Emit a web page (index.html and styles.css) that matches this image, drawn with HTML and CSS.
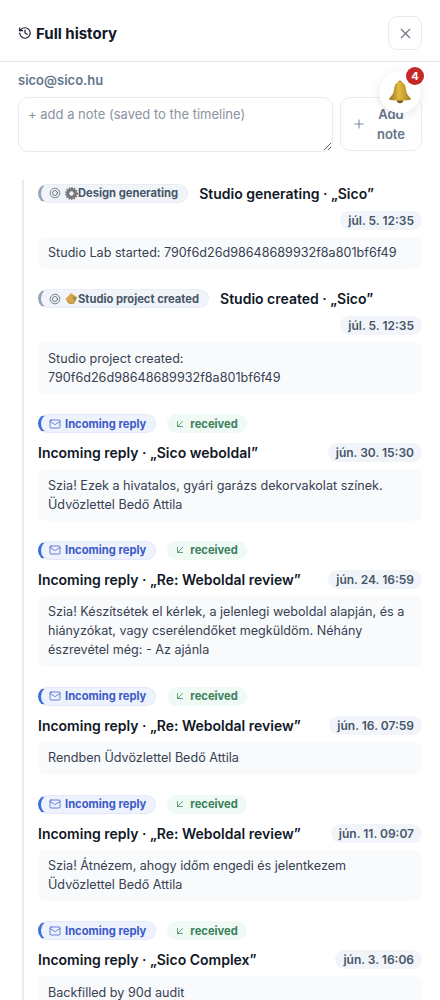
FILE: index.html
```html
<!DOCTYPE html>
<html lang="en">
<head>
    <meta charset="UTF-8">
    <meta name="viewport" content="width=device-width, initial-scale=1.0">
    <title>Full history</title>
    <link rel="stylesheet" href="styles.css">
</head>
<body>
    <svg class="sprite" width="0" height="0">
        <symbol id="i-mail" viewBox="0 0 24 24"><rect x="2" y="4" width="20" height="16" rx="2"/><path d="m22 7-8.97 5.7a1.94 1.94 0 0 1-2.06 0L2 7"/></symbol>
        <symbol id="i-in" viewBox="0 0 24 24"><path d="M17 7 7 17"/><path d="M17 17H7V7"/></symbol>
        <symbol id="i-cog" viewBox="0 0 24 24"><circle cx="12" cy="12" r="9.5" stroke-dasharray="3 1.4"/><circle cx="12" cy="12" r="5"/></symbol>
        <symbol id="i-gear" viewBox="0 0 24 24"><circle cx="12" cy="12" r="7" fill="none" stroke="#77797e" stroke-width="6"/><circle cx="12" cy="12" r="10.5" fill="none" stroke="#6b6d72" stroke-width="3" stroke-dasharray="2.4 2.4"/></symbol>
    </svg>

    <div class="drawer">
        <!-- Header -->
        <div class="drawer-head">
            <h1 class="drawer-title">
                <svg class="icon" width="14" height="14" viewBox="0 0 24 24"><path d="M3 12a9 9 0 1 0 9-9 9.75 9.75 0 0 0-6.74 2.74L3 8"/><path d="M3 3v5h5"/><path d="M12 7v5l4 2"/></svg>
                Full history
            </h1>
            <button class="close-btn">
                <svg class="icon" width="17" height="17" viewBox="0 0 24 24"><path d="M18 6 6 18"/><path d="m6 6 12 12"/></svg>
            </button>
        </div>

        <div class="drawer-body">
            <div class="contact">sico@sico.hu</div>

            <!-- Add note -->
            <div class="note-form">
                <textarea class="note-input" placeholder="+ add a note (saved to the timeline)"></textarea>
                <button class="note-btn">
                    <svg class="icon" width="14" height="14" viewBox="0 0 24 24"><path d="M5 12h14"/><path d="M12 5v14"/></svg>
                    <span>Add note</span>
                </button>
            </div>

            <!-- Timeline -->
            <div class="timeline">
                <div class="event">
                    <div class="event-head event-head-studio">
                        <span class="tag tag-studio">
                            <svg class="icon" width="12" height="12"><use href="#i-cog"/></svg>
                            <span class="tag-text"><svg class="emoji" width="13" height="13"><use href="#i-gear"/></svg>Design generating</span>
                        </span>
                        <span class="event-title">Studio generating · „Sico”</span>
                        <span class="event-time">júl. 5. 12:35</span>
                    </div>
                    <div class="event-text">Studio Lab started: 790f6d26d98648689932f8a801bf6f49</div>
                </div>

                <div class="event">
                    <div class="event-head event-head-studio">
                        <span class="tag tag-studio">
                            <svg class="icon" width="12" height="12"><use href="#i-cog"/></svg>
                            <span class="tag-text"><svg class="emoji" width="13" height="13" viewBox="0 0 24 24"><path d="M1 13 11 2l11 7-5 13-11-2z" fill="#dba64a"/><path d="M1 13l6 8 10 1-11-3z" fill="#8a6a2c"/><path d="M13 8l9 2-4 8z" fill="#7d9a5e"/></svg>Studio project created</span>
                        </span>
                        <span class="event-title">Studio created · „Sico”</span>
                        <span class="event-time">júl. 5. 12:35</span>
                    </div>
                    <div class="event-text">Studio project created: 790f6d26d98648689932f8a801bf6f49</div>
                </div>

                <div class="event">
                    <div class="event-head">
                        <span class="tag tag-reply"><svg class="icon" width="12" height="12"><use href="#i-mail"/></svg><span class="tag-text">Incoming reply</span></span>
                        <span class="tag tag-received"><svg class="icon" width="12" height="12"><use href="#i-in"/></svg><span class="tag-text">received</span></span>
                        <span class="event-title">Incoming reply · „Sico weboldal”</span>
                        <span class="event-time">jún. 30. 15:30</span>
                    </div>
                    <div class="event-text">Szia! Ezek a hivatalos, gyári garázs dekorvakolat színek. Üdvözlettel Bedő Attila</div>
                </div>

                <div class="event">
                    <div class="event-head">
                        <span class="tag tag-reply"><svg class="icon" width="12" height="12"><use href="#i-mail"/></svg><span class="tag-text">Incoming reply</span></span>
                        <span class="tag tag-received"><svg class="icon" width="12" height="12"><use href="#i-in"/></svg><span class="tag-text">received</span></span>
                        <span class="event-title">Incoming reply · „Re: Weboldal review”</span>
                        <span class="event-time">jún. 24. 16:59</span>
                    </div>
                    <div class="event-text">Szia! Készítsétek el kérlek, a jelenlegi weboldal alapján, és a hiányzókat, vagy cserélendőket megküldöm. Néhány észrevétel még: - Az ajánla</div>
                </div>

                <div class="event">
                    <div class="event-head">
                        <span class="tag tag-reply"><svg class="icon" width="12" height="12"><use href="#i-mail"/></svg><span class="tag-text">Incoming reply</span></span>
                        <span class="tag tag-received"><svg class="icon" width="12" height="12"><use href="#i-in"/></svg><span class="tag-text">received</span></span>
                        <span class="event-title">Incoming reply · „Re: Weboldal review”</span>
                        <span class="event-time">jún. 16. 07:59</span>
                    </div>
                    <div class="event-text">Rendben Üdvözlettel Bedő Attila</div>
                </div>

                <div class="event">
                    <div class="event-head">
                        <span class="tag tag-reply"><svg class="icon" width="12" height="12"><use href="#i-mail"/></svg><span class="tag-text">Incoming reply</span></span>
                        <span class="tag tag-received"><svg class="icon" width="12" height="12"><use href="#i-in"/></svg><span class="tag-text">received</span></span>
                        <span class="event-title">Incoming reply · „Re: Weboldal review”</span>
                        <span class="event-time">jún. 11. 09:07</span>
                    </div>
                    <div class="event-text">Szia! Átnézem, ahogy időm engedi és jelentkezem Üdvözlettel Bedő Attila</div>
                </div>

                <div class="event">
                    <div class="event-head">
                        <span class="tag tag-reply"><svg class="icon" width="12" height="12"><use href="#i-mail"/></svg><span class="tag-text">Incoming reply</span></span>
                        <span class="tag tag-received"><svg class="icon" width="12" height="12"><use href="#i-in"/></svg><span class="tag-text">received</span></span>
                        <span class="event-title">Incoming reply · „Sico Complex”</span>
                        <span class="event-time">jún. 3. 16:06</span>
                    </div>
                    <div class="event-text">Backfilled by 90d audit</div>
                </div>
            </div>
        </div>

        <!-- Floating notifications -->
        <div class="bell">
            <svg width="26" height="26" viewBox="0 0 26 26">
                <defs>
                    <linearGradient id="bellGold" x1="0" y1="0" x2="1" y2="0">
                        <stop offset="0" stop-color="#8f7420"/>
                        <stop offset="0.45" stop-color="#e3bb3e"/>
                        <stop offset="1" stop-color="#a5801f"/>
                    </linearGradient>
                </defs>
                <circle cx="13" cy="21" r="3.2" fill="#7a5a1c"/>
                <circle cx="13" cy="3.4" r="1.9" fill="#b08d2a"/>
                <path d="M13 3C8.6 3 7.4 6.6 7 10.5 6.6 14.6 4.6 17 2.4 19.2c-.7.8 0 1.6 1 1.7 3 .4 6.3.6 9.6.6s6.600-.2 9.600-.6c1-.1 1.700-.9 1-1.700C21.400 17 19.400 14.600 19 10.500 18.600 6.600 17.400 3 13 3z" fill="url(#bellGold)"/>
            </svg>
            <span class="bell-badge">4</span>
        </div>
    </div>
</body>
</html>
```

FILE: styles.css
```css
* {
    box-sizing: border-box;
}

body {
    margin: 0;
    font-family: Inter, "Noto Sans", sans-serif;
    color: #111827;
    background: #fff;
}

.sprite {
    position: absolute;
}

.icon {
    fill: none;
    stroke: currentColor;
    stroke-width: 1.5;
    stroke-linecap: round;
    stroke-linejoin: round;
    flex-shrink: 0;
}

.drawer {
    position: relative;
    width: 440px;
    height: 1000px;
    overflow: hidden;
}

/* Header */
.drawer-head {
    display: flex;
    align-items: center;
    justify-content: space-between;
    height: 62px;
    padding: 5px 18px 0;
    border-bottom: 1px solid #e5e7eb;
}

.drawer-title {
    display: flex;
    align-items: center;
    gap: 4px;
    margin: 0;
    font-size: 15px;
    font-weight: 700;
}

.drawer-title .icon {
    stroke-width: 2;
}

.close-btn {
    display: flex;
    align-items: center;
    justify-content: center;
    width: 34px;
    height: 34px;
    padding: 0;
    color: #6b7280;
    background: #fff;
    border: 1px solid #e8ebf0;
    border-radius: 9px;
}

.drawer-body {
    padding: 9px 18px 0;
}

.contact {
    font-size: 13px;
    font-weight: 600;
    line-height: 18px;
    color: #64748b;
}

/* Add note */
.note-form {
    display: flex;
    gap: 7px;
    margin-top: 8px;
}

.note-input {
    flex: 1;
    height: 55px;
    padding: 7px 9px;
    font-family: inherit;
    font-size: 13px;
    line-height: 18px;
    color: #111827;
    border: 1px solid #e8ebf0;
    border-radius: 10px;
    outline: none;
}

.note-input::placeholder {
    color: #8b93a1;
}

.note-btn {
    display: flex;
    align-items: center;
    gap: 5px;
    width: 82px;
    height: 54px;
    padding: 0 10px 0 11px;
    font-family: inherit;
    font-size: 13px;
    font-weight: 600;
    line-height: 20px;
    color: #64748b;
    background: #fff;
    border: 1px solid #e8ebf0;
    border-radius: 10px;
}

/* Timeline */
.timeline {
    display: flex;
    flex-direction: column;
    gap: 20px;
    margin: 28px 0 0 4px;
    padding: 3.5px 0 0 14px;
    border-left: 2px solid #e8ebf0;
}

.event-head {
    display: flex;
    flex-wrap: wrap;
    align-items: center;
    gap: 10px 11px;
}

.event-head-studio {
    row-gap: 8px;
}

.tag {
    display: inline-flex;
    align-items: center;
    gap: 4px;
    height: 19px;
    padding: 0 9px 0 8px;
    font-size: 11.2px;
    font-weight: 700;
    border-radius: 999px;
}

.tag-studio {
    color: #475569;
    background: #f1f5f9;
    border: 1px solid #e8edf3;
    border-left: 3px solid #94a3b8;
}

.tag-reply {
    color: #3b5bc9;
    background: #eef2fd;
    border: 1px solid #e3e9fa;
    border-left: 3px solid #3b6fd8;
}

.tag-received {
    padding-left: 7px;
    color: #3b7f5c;
    background: #effaf4;
}

.tag-text {
    display: inline-flex;
    align-items: center;
}

.emoji {
    flex-shrink: 0;
}

.event-title {
    font-size: 14px;
    font-weight: 600;
    line-height: 19px;
    color: #111827;
}

.event-time {
    margin-left: auto;
    padding: 0 8px;
    font-size: 12px;
    font-weight: 600;
    line-height: 19px;
    color: #475569;
    background: #f1f5f9;
    border-radius: 999px;
}

.event-text {
    margin-top: 7px;
    padding: 7.5px 10px 6.5px;
    font-size: 12.6px;
    line-height: 1.5;
    color: #374151;
    background: #f8fafc;
    border-radius: 8px;
}

/* Floating notifications */
.bell {
    position: absolute;
    top: 71px;
    left: 379px;
    display: flex;
    align-items: center;
    justify-content: center;
    width: 42px;
    height: 42px;
    background: #fff;
    border-radius: 50%;
    box-shadow: 0 2px 10px rgba(15, 23, 42, 0.1);
}

.bell-badge {
    position: absolute;
    top: -4px;
    right: -3px;
    display: flex;
    align-items: center;
    justify-content: center;
    width: 18px;
    height: 18px;
    font-size: 11px;
    font-weight: 700;
    color: #fff;
    background: #c62828;
    border-radius: 50%;
}
```
